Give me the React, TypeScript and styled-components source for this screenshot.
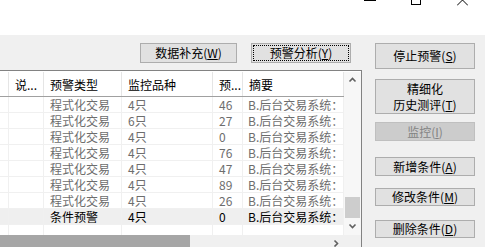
import React from 'react';
import styled, { createGlobalStyle, css } from 'styled-components';

const GlobalStyle = createGlobalStyle`
  html, body {
    margin: 0;
    padding: 0;
    background: #f0f0f0;
  }
  body {
    font-family: "Noto Sans CJK SC", "Liberation Sans", sans-serif;
    font-size: 12px;
    color: #000;
  }
`;

type Row = {
  kind: string;
  product: string;
  count: string;
  summary: string;
  active?: boolean;
};

const rows: Row[] = [
  { kind: '程式化交易', product: '4只', count: '46', summary: 'B.后台交易系统：' },
  { kind: '程式化交易', product: '6只', count: '27', summary: 'B.后台交易系统：' },
  { kind: '程式化交易', product: '4只', count: '0', summary: 'B.后台交易系统：' },
  { kind: '程式化交易', product: '4只', count: '76', summary: 'B.后台交易系统：' },
  { kind: '程式化交易', product: '4只', count: '47', summary: 'B.后台交易系统：' },
  { kind: '程式化交易', product: '4只', count: '89', summary: 'B.后台交易系统：' },
  { kind: '程式化交易', product: '4只', count: '26', summary: 'B.后台交易系统：' },
  { kind: '条件预警', product: '4只', count: '0', summary: 'B.后台交易系统：', active: true },
];

const COLS = [9, 35, 78, 91, 30, 101];

const Window = styled.div`
  width: 485px;
  height: 247px;
  overflow: hidden;
  display: flex;
  flex-direction: column;
  background: #f0f0f0;
`;

const TitleBar = styled.div`
  height: 35px;
  flex: none;
  background: #fff;
  display: flex;
  justify-content: flex-end;
  align-items: flex-start;
`;

const CaptionButton = styled.div`
  width: 46px;
  height: 6px;
  display: flex;
  justify-content: center;
  align-items: flex-start;
  svg {
    display: block;
  }
`;

const Main = styled.div`
  flex: 1;
  display: flex;
  min-height: 0;
`;

const LeftPane = styled.div`
  width: 362px;
  flex: none;
  display: flex;
  flex-direction: column;
`;

const Toolbar = styled.div`
  height: 35px;
  flex: none;
  box-sizing: border-box;
  display: flex;
  justify-content: flex-end;
  align-items: flex-start;
  gap: 14px;
  padding: 8px 11px 0 0;
`;

const Button = styled.div<{ $w?: number; $h?: number; $top?: number; $focused?: boolean; $disabled?: boolean }>`
  position: relative;
  box-sizing: border-box;
  width: ${(p) => p.$w ?? 100}px;
  height: ${(p) => p.$h ?? 20}px;
  margin-top: ${(p) => p.$top ?? 0}px;
  flex: none;
  border: 1px solid #adadad;
  background: #e1e1e1;
  display: flex;
  flex-direction: column;
  align-items: center;
  justify-content: center;
  text-align: center;
  font-size: 12px;
  line-height: 14px;
  color: #000;
  ${(p) =>
    p.$disabled &&
    css`
      background: #cccccc;
      border-color: #bfbfbf;
      color: #838383;
    `}
  ${(p) =>
    p.$focused &&
    css`
      &::after {
        content: '';
        position: absolute;
        inset: 1px;
        border: 1px dotted #000;
      }
    `}
`;

const ButtonLine = styled.span`
  display: block;
  height: 16px;
  line-height: 16px;
`;

const Key = styled.span`
  text-decoration: underline;
`;

const Table = styled.div`
  flex: 1;
  min-height: 0;
  display: flex;
  flex-direction: column;
  border-top: 1px solid #828282;
  border-right: 1px solid #828282;
  box-shadow: inset 0 1px 0 #fff, inset -1px 0 0 #fff;
  background: #fff;
`;

const TableBody = styled.div`
  display: flex;
  height: 163px;
  flex: none;
  padding-top: 1px;
`;

const ListArea = styled.div`
  width: 344px;
  flex: none;
  overflow: hidden;
  display: flex;
  flex-direction: column;
`;

const HeaderRow = styled.div`
  height: 24px;
  flex: none;
  display: flex;
  background: #fff;
  border-bottom: 1px solid #a0a0a0;
`;

const HeaderCell = styled.div<{ $w: number }>`
  width: ${(p) => p.$w}px;
  flex: none;
  box-sizing: border-box;
  border-right: 1px solid #e5e5e5;
  padding-left: 6px;
  display: flex;
  align-items: center;
  white-space: nowrap;
  overflow: hidden;
  font-size: 12px;
  &:first-child {
    padding-left: 0;
  }
`;

const DataRow = styled.div<{ $active?: boolean }>`
  height: 16px;
  flex: none;
  display: flex;
  box-sizing: border-box;
  border-bottom: 1px solid #f0f0f0;
  background: ${(p) => (p.$active ? '#efefef' : '#fff')};
  color: ${(p) => (p.$active ? '#000' : '#6d6d6d')};
`;

const Cell = styled.div<{ $w: number }>`
  width: ${(p) => p.$w}px;
  flex: none;
  box-sizing: border-box;
  border-right: 1px solid #f0f0f0;
  padding-left: 6px;
  display: flex;
  align-items: center;
  white-space: nowrap;
  overflow: hidden;
  font-size: 12px;
  line-height: 15px;
  &:first-child {
    padding-left: 0;
  }
  &:last-child {
    padding-left: 5px;
  }
`;

const Filler = styled.div`
  flex: 1;
  display: flex;
`;

const VScroll = styled.div`
  width: 17px;
  flex: none;
  background: #f7f7f7;
  display: flex;
  flex-direction: column;
  align-items: center;
`;

const ArrowBox = styled.div`
  height: 17px;
  width: 17px;
  flex: none;
  display: flex;
  align-items: center;
  justify-content: center;
`;

const VTrack = styled.div`
  flex: 1;
  width: 100%;
  display: flex;
  flex-direction: column;
  justify-content: flex-end;
  align-items: center;
`;

const VThumb = styled.div`
  width: 15px;
  height: 21px;
  background: #cdcdcd;
`;

const HScroll = styled.div`
  height: 17px;
  flex: none;
  display: flex;
  background: #f0f0f0;
`;

const HThumb = styled.div`
  width: 190px;
  height: 100%;
  background: #a6a6a6;
`;

const HTrack = styled.div`
  flex: 1;
  display: flex;
  justify-content: flex-end;
  align-items: flex-start;
  padding-right: 20px;
  padding-top: 4px;
`;

const RightPane = styled.div`
  flex: 1;
  display: flex;
  flex-direction: column;
  padding-left: 13px;
`;

const headers = ['', '说...', '预警类型', '监控品种', '预...', '摘要'];

const Chevron = ({ dir }: { dir: 'up' | 'down' | 'right' }) => {
  const d =
    dir === 'up'
      ? 'M1.5 5.5 L4.5 2.5 L7.5 5.5'
      : dir === 'down'
      ? 'M1.5 2.5 L4.5 5.5 L7.5 2.5'
      : 'M2.5 1.5 L5.5 4.5 L2.5 7.5';
  return (
    <svg width="9" height="9" viewBox="0 0 9 9">
      <path d={d} fill="none" stroke="#606060" strokeWidth="1.6" />
    </svg>
  );
};

export default function App() {
  return (
    <>
      <GlobalStyle />
      <Window>
        <TitleBar>
          <CaptionButton>
            <svg width="12" height="2" viewBox="0 0 12 2">
              <line x1="0" y1="0.5" x2="12" y2="0.5" stroke="#000" strokeWidth="1" />
            </svg>
          </CaptionButton>
          <CaptionButton>
            <svg width="11" height="6" viewBox="0 0 11 6">
              <rect x="0.5" y="-5" width="9" height="9.5" fill="none" stroke="#000" strokeWidth="1" />
            </svg>
          </CaptionButton>
          <CaptionButton>
            <svg width="11" height="6" viewBox="0 0 11 6">
              <path d="M0 5.5 L10.5 -5 M11 5.5 L0.5 -5" stroke="#000" strokeWidth="1" fill="none" />
            </svg>
          </CaptionButton>
        </TitleBar>
        <Main>
          <LeftPane>
            <Toolbar>
              <Button $w={97}>
                <span>
                  数据补充(<Key>W</Key>)
                </span>
              </Button>
              <Button $w={100} $focused>
                <span>
                  预警分析(<Key>Y</Key>)
                </span>
              </Button>
            </Toolbar>
            <Table>
              <TableBody>
                <ListArea>
                  <HeaderRow>
                    {headers.map((h, i) => (
                      <HeaderCell key={i} $w={COLS[i]}>
                        {h}
                      </HeaderCell>
                    ))}
                  </HeaderRow>
                  {rows.map((r, i) => (
                    <DataRow key={i} $active={r.active}>
                      <Cell $w={COLS[0]} />
                      <Cell $w={COLS[1]} />
                      <Cell $w={COLS[2]}>{r.kind}</Cell>
                      <Cell $w={COLS[3]}>{r.product}</Cell>
                      <Cell $w={COLS[4]}>{r.count}</Cell>
                      <Cell $w={COLS[5]}>{r.summary}</Cell>
                    </DataRow>
                  ))}
                  <Filler>
                    {COLS.map((w, i) => (
                      <Cell key={i} $w={w} />
                    ))}
                  </Filler>
                </ListArea>
                <VScroll>
                  <ArrowBox>
                    <Chevron dir="up" />
                  </ArrowBox>
                  <VTrack>
                    <VThumb />
                  </VTrack>
                  <ArrowBox>
                    <Chevron dir="down" />
                  </ArrowBox>
                </VScroll>
              </TableBody>
              <HScroll>
                <HThumb />
                <HTrack>
                  <Chevron dir="right" />
                </HTrack>
              </HScroll>
            </Table>
          </LeftPane>
          <RightPane>
            <Button $top={8} $h={26} $w={100}>
              <span>
                停止预警(<Key>S</Key>)
              </span>
            </Button>
            <Button $top={10} $h={35} $w={100}>
              <ButtonLine>精细化</ButtonLine>
              <ButtonLine>
                历史测评(<Key>T</Key>)
              </ButtonLine>
            </Button>
            <Button $top={8} $h={19} $w={100} $disabled>
              <span>
                监控(<Key>I</Key>)
              </span>
            </Button>
            <Button $top={16} $h={19} $w={100}>
              <span>
                新增条件(<Key>A</Key>)
              </span>
            </Button>
            <Button $top={12} $h={18} $w={100}>
              <span>
                修改条件(<Key>M</Key>)
              </span>
            </Button>
            <Button $top={14} $h={18} $w={100}>
              <span>
                删除条件(<Key>D</Key>)
              </span>
            </Button>
          </RightPane>
        </Main>
      </Window>
    </>
  );
}
